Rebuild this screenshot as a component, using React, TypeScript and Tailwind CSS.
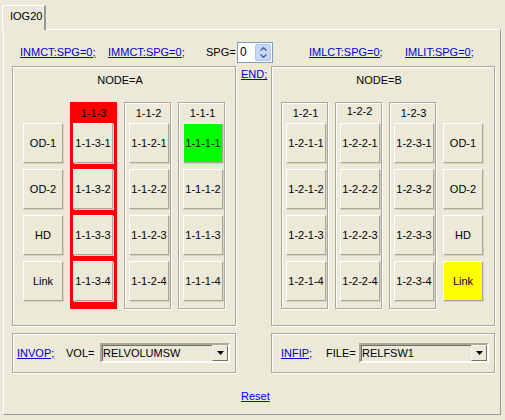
import React from "react";

const etched =
  "border border-[#ACA899] shadow-[inset_1px_1px_0_#ffffff,1px_1px_0_#ffffff]";

function Btn({ label, tone }: { label: string; tone?: "green" | "yellow" }) {
  const bg = tone === "green" ? "bg-[#00FF00]" : tone === "yellow" ? "bg-[#FFFF00]" : "bg-[#ECE9D8]";
  return (
    <div
      className={`w-[40px] h-[40px] flex items-center justify-center border border-t-white border-l-white border-r-[#ACA899] border-b-[#ACA899] shadow-[1px_1px_0_#D6D2C2] ${bg}`}
    >
      {label}
    </div>
  );
}

function Column({ title, cells, red, high }: { title: string; cells: string[]; red?: boolean; high?: boolean }) {
  return (
    <div
      className={
        red
          ? "w-[47px] flex flex-col bg-[#FF0000] border border-[#FF0000] pl-[2px] pr-[2px] pb-[7px]"
          : `w-[47px] flex flex-col ${etched} pl-[4px] pr-[2px] pb-[7px]`
      }
    >
      <div className={high ? "h-[20px] flex items-center justify-center pb-[4px]" : "h-[20px] flex items-center justify-center"}>
        {title}
      </div>
      <div className="flex flex-col gap-[6px]">
        {cells.map((c) => (
          <Btn key={c} label={c} tone={c === "1-1-1-1" ? "green" : undefined} />
        ))}
      </div>
    </div>
  );
}

function SideCol({ labels, linkOn }: { labels: string[]; linkOn?: boolean }) {
  return (
    <div className="flex flex-col gap-[6px] pt-[21px]">
      {labels.map((l) => (
        <Btn key={l} label={l} tone={linkOn && l === "Link" ? "yellow" : undefined} />
      ))}
    </div>
  );
}

function Combo({ value }: { value: string }) {
  return (
    <div className="w-[130px] h-[20px] flex items-center border-2 border-t-[#ACA899] border-l-[#ACA899] border-b-white border-r-white shadow-[inset_1px_1px_0_#716F64]">
      <div className="flex-1 pl-[1px] pt-[1px]">{value}</div>
      <div className="w-[16px] h-[16px] flex items-center justify-center border border-t-[#F4F3EE] border-l-[#F4F3EE] border-r-[#716F64] border-b-[#716F64] bg-[#ECE9D8]">
        <svg width="7" height="4" viewBox="0 0 7 4">
          <path d="M0 0h7L3.5 4z" fill="#000" />
        </svg>
      </div>
    </div>
  );
}

const link = "text-[#0000CC] underline";

export default function App() {
  return (
    <div className="w-[505px] h-[420px] bg-[#ECE9D8] pt-[5px] pl-[2px] text-[11px] leading-[13px] text-black font-['Liberation_Sans',Arial,sans-serif]">
      {/* tab strip */}
      <div className="flex">
        <div className="relative z-10 w-[44px] h-[25px] bg-[#ECE9D8] border-t border-l border-t-white border-l-white border-r-2 border-r-[#919B9C] pl-[7px] pt-[4px]">
          IOG20
        </div>
      </div>

      {/* tab page */}
      <div className="-mt-[1px] ml-[1px] w-[498px] h-[386px] border border-t-white border-l-white border-r-[#919B9C] border-b-[#919B9C] flex flex-col">
        {/* command links */}
        <div className="mt-[11px] h-[22px] pl-[16px] flex items-center">
          <span className={`w-[88px] ${link}`}>INMCT:SPG=0;</span>
          <span className={`w-[98px] ${link}`}>IMMCT:SPG=0;</span>
          <span className="w-[31px]">SPG=</span>
          <div className="w-[36px] h-[21px] bg-white border border-[#7F9DB9] flex items-center pl-[2px]">
            <span className="flex-1 text-[12px]">0</span>
            <div className="w-[16px] h-[17px] mr-[1px] rounded-[2px] bg-[#C6D6FC] border border-[#B2C5F0] flex flex-col items-center justify-center gap-[3px]">
              <svg width="7" height="4" viewBox="0 0 7 4">
                <path d="M0.5 3.5L3.5 0.8L6.5 3.5" stroke="#4D6185" strokeWidth="1.4" fill="none" />
              </svg>
              <svg width="7" height="4" viewBox="0 0 7 4">
                <path d="M0.5 0.5L3.5 3.2L6.5 0.5" stroke="#4D6185" strokeWidth="1.4" fill="none" />
              </svg>
            </div>
          </div>
          <span className={`ml-[36px] w-[96px] ${link}`}>IMLCT:SPG=0;</span>
          <span className={link}>IMLIT:SPG=0;</span>
        </div>

        {/* nodes */}
        <div className="mt-[3px] pl-[8px] flex">
          <div className={`w-[224px] h-[260px] ${etched} flex flex-col`}>
            <div className="pt-[7px] pr-[8px] text-center">NODE=A</div>
            <div className="mt-[15px] pl-[10px] flex items-start gap-[7px]">
              <SideCol labels={["OD-1", "OD-2", "HD", "Link"]} />
              <Column red title="1-1-3" cells={["1-1-3-1", "1-1-3-2", "1-1-3-3", "1-1-3-4"]} />
              <Column title="1-1-2" cells={["1-1-2-1", "1-1-2-2", "1-1-2-3", "1-1-2-4"]} />
              <Column title="1-1-1" cells={["1-1-1-1", "1-1-1-2", "1-1-1-3", "1-1-1-4"]} />
            </div>
          </div>

          <div className="w-[35px] pl-[5px] pt-[2px]">
            <span className={link}>END;</span>
          </div>

          <div className={`w-[224px] h-[260px] ${etched} flex flex-col`}>
            <div className="pt-[7px] pr-[8px] text-center">NODE=B</div>
            <div className="mt-[15px] pl-[9px] flex items-start gap-[7px]">
              <Column title="1-2-1" cells={["1-2-1-1", "1-2-1-2", "1-2-1-3", "1-2-1-4"]} />
              <Column high title="1-2-2" cells={["1-2-2-1", "1-2-2-2", "1-2-2-3", "1-2-2-4"]} />
              <Column title="1-2-3" cells={["1-2-3-1", "1-2-3-2", "1-2-3-3", "1-2-3-4"]} />
              <SideCol linkOn labels={["OD-1", "OD-2", "HD", "Link"]} />
            </div>
          </div>
        </div>

        {/* file selection */}
        <div className="mt-[7px] pl-[8px] flex">
          <div className={`w-[224px] h-[40px] ${etched} flex items-center pl-[4px]`}>
            <span className={`w-[49px] ${link}`}>INVOP;</span>
            <span className="w-[34px]">VOL=</span>
            <Combo value="RELVOLUMSW" />
          </div>
          <div className="w-[35px]" />
          <div className={`w-[224px] h-[40px] ${etched} flex items-center pl-[9px]`}>
            <span className={`w-[45px] ${link}`}>INFIP;</span>
            <span className="w-[33px]">FILE=</span>
            <Combo value="RELFSW1" />
          </div>
        </div>

        <div className="mt-[17px] pl-[237px]">
          <span className="text-[#0000FF] underline">Reset</span>
        </div>
      </div>
    </div>
  );
}
